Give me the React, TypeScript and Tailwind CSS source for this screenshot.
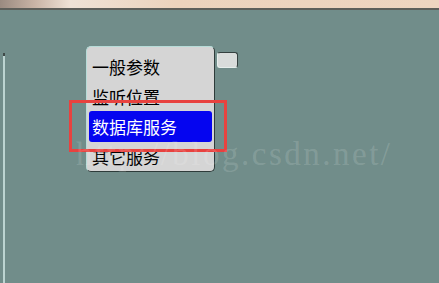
import React from "react";

const ITEMS = [
  { label: "一般参数", h: "h-[30px]" },
  { label: "监听位置", h: "h-[29px]" },
  { label: "数据库服务", h: "h-[32px]", active: true },
  { label: "其它服务", h: "h-[29px]" },
];

export default function App() {
  return (
    <div className="relative w-[439px] h-[283px] overflow-hidden bg-[#718d8a] flex flex-col">
      {/* title strip */}
      <div className="h-[8px] shrink-0 bg-[linear-gradient(90deg,#9a8a80_0%,#c9b4a6_8%,#efe2d6_16%,#ecd3bd_40%,#eed5c0_100%)]" />
      <div className="h-[2px] shrink-0 bg-[#5d5f5a]" />

      <div className="relative flex-1 flex">
        {/* left window edge */}
        <div className="ml-[3px] mt-[43px] w-[2px] flex flex-col">
          <div className="h-[3px] bg-[#3f4a48]" />
          <div className="flex-1 bg-[#bcd4d1]" />
        </div>

        <div className="flex items-start pt-[36px] pl-[81px] gap-[2px]">
          {/* popup menu */}
          <div
            className="w-[129px] h-[126px] rounded-[5px] bg-[#d5d5d5] border border-[#b7dcd8] border-r-[#2e3b3a] border-b-[#2e3b3a] px-[2px] pt-[5px] flex flex-col"
            style={{ fontFamily: '"Noto Sans CJK SC", "Noto Sans", sans-serif' }}
          >
            {ITEMS.map((it) => (
              <div
                key={it.label}
                className={`${it.h} flex items-center pl-[3px] text-[17px] leading-none ${
                  it.active ? "bg-[#0505f0] text-white rounded-[3px]" : "text-black"
                }`}
              >
                {it.label}
              </div>
            ))}
          </div>

          {/* small side button */}
          <div className="mt-[6px] w-[21px] h-[16px] rounded-[3px] bg-[#d9dcdb] border border-[#e6eeec] border-t-[#34403f] border-r-[#34403f]" />
        </div>

        {/* red highlight frame */}
        <div className="absolute left-[69px] top-[90px] w-[158px] h-[52px] border-[3px] border-[#e8423f]" />

        {/* watermark */}
        <div
          className="absolute left-[76px] top-[128px] text-[33px] leading-none tracking-[2.5px] text-white/15 whitespace-nowrap pointer-events-none"
          style={{ fontFamily: '"Liberation Serif", serif' }}
        >
          http://blog.csdn.net/
        </div>
      </div>
    </div>
  );
}
